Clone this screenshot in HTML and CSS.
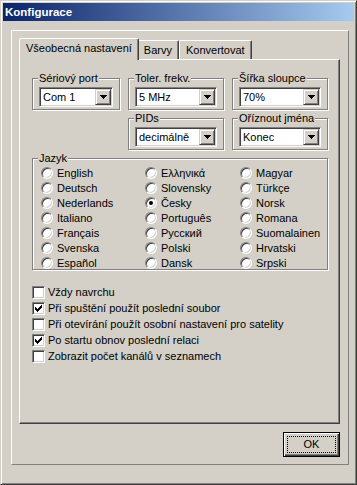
FILE: index.html
```html
<!DOCTYPE html>
<html lang="cs">
<head>
  <meta charset="UTF-8">
  <title>Konfigurace</title>
  <link rel="stylesheet" href="styles.css">
</head>
<body>
  <div class="window">
    <div class="titlebar">Konfigurace</div>
    <div class="frame">
      <div class="tabs">
        <div class="tab active">Všeobecná nastavení</div>
        <div class="tab">Barvy</div>
        <div class="tab">Konvertovat</div>
      </div>
      <div class="panel">
        <div class="combos">
          <div class="group">
            <span class="group-label">Sériový port</span>
            <div class="combo"><span class="combo-text">Com 1</span><span class="combo-btn"><svg width="7" height="4" viewBox="0 0 7 4"><path d="M0 0h7v1H0zM1 1h5v1H1zM2 2h3v1H2zM3 3h1v1H3z"/></svg></span></div>
          </div>
          <div class="group">
            <span class="group-label">Toler. frekv.</span>
            <div class="combo"><span class="combo-text">5 MHz</span><span class="combo-btn"><svg width="7" height="4" viewBox="0 0 7 4"><path d="M0 0h7v1H0zM1 1h5v1H1zM2 2h3v1H2zM3 3h1v1H3z"/></svg></span></div>
          </div>
          <div class="group">
            <span class="group-label">Šířka sloupce</span>
            <div class="combo"><span class="combo-text">70%</span><span class="combo-btn"><svg width="7" height="4" viewBox="0 0 7 4"><path d="M0 0h7v1H0zM1 1h5v1H1zM2 2h3v1H2zM3 3h1v1H3z"/></svg></span></div>
          </div>
          <div class="group col-2">
            <span class="group-label">PIDs</span>
            <div class="combo"><span class="combo-text">decimálně</span><span class="combo-btn"><svg width="7" height="4" viewBox="0 0 7 4"><path d="M0 0h7v1H0zM1 1h5v1H1zM2 2h3v1H2zM3 3h1v1H3z"/></svg></span></div>
          </div>
          <div class="group">
            <span class="group-label">Oříznout jména</span>
            <div class="combo"><span class="combo-text">Konec</span><span class="combo-btn"><svg width="7" height="4" viewBox="0 0 7 4"><path d="M0 0h7v1H0zM1 1h5v1H1zM2 2h3v1H2zM3 3h1v1H3z"/></svg></span></div>
          </div>
        </div>

        <div class="group jazyk">
          <span class="group-label">Jazyk</span>
          <div class="radios">
            <label class="radio-row"><span class="radio"></span>English</label>
            <label class="radio-row"><span class="radio"></span>Ελληνικά</label>
            <label class="radio-row"><span class="radio"></span>Magyar</label>
            <label class="radio-row"><span class="radio"></span>Deutsch</label>
            <label class="radio-row"><span class="radio"></span>Slovensky</label>
            <label class="radio-row"><span class="radio"></span>Türkçe</label>
            <label class="radio-row"><span class="radio"></span>Nederlands</label>
            <label class="radio-row"><span class="radio checked"></span>Česky</label>
            <label class="radio-row"><span class="radio"></span>Norsk</label>
            <label class="radio-row"><span class="radio"></span>Italiano</label>
            <label class="radio-row"><span class="radio"></span>Português</label>
            <label class="radio-row"><span class="radio"></span>Romana</label>
            <label class="radio-row"><span class="radio"></span>Français</label>
            <label class="radio-row"><span class="radio"></span>Русский</label>
            <label class="radio-row"><span class="radio"></span>Suomalainen</label>
            <label class="radio-row"><span class="radio"></span>Svenska</label>
            <label class="radio-row"><span class="radio"></span>Polski</label>
            <label class="radio-row"><span class="radio"></span>Hrvatski</label>
            <label class="radio-row"><span class="radio"></span>Español</label>
            <label class="radio-row"><span class="radio"></span>Dansk</label>
            <label class="radio-row"><span class="radio"></span>Srpski</label>
          </div>
        </div>

        <div class="checks">
          <label class="check-row"><span class="checkbox"></span>Vždy navrchu</label>
          <label class="check-row"><span class="checkbox"><svg width="7" height="7" viewBox="0 0 7 7"><path d="M0 2h1v3H0zM1 3h1v3H1zM2 4h1v3H2zM3 3h1v3H3zM4 2h1v3H4zM5 1h1v3H5zM6 0h1v3H6z"/></svg></span>Při spuštění použít poslední soubor</label>
          <label class="check-row"><span class="checkbox"></span>Při otevírání použít osobní nastavení pro satelity</label>
          <label class="check-row"><span class="checkbox"><svg width="7" height="7" viewBox="0 0 7 7"><path d="M0 2h1v3H0zM1 3h1v3H1zM2 4h1v3H2zM3 3h1v3H3zM4 2h1v3H4zM5 1h1v3H5zM6 0h1v3H6z"/></svg></span>Po startu obnov poslední relaci</label>
          <label class="check-row"><span class="checkbox"></span>Zobrazit počet kanálů v seznamech</label>
        </div>
      </div>

      <div class="footer">
        <button class="btn default"><span class="focus">OK</span></button>
      </div>
    </div>
  </div>
</body>
</html>
```

FILE: styles.css
```css
body {
  margin: 0;
  background-color: #d4d0c8;
  font-family: "Liberation Sans", Arial, sans-serif;
  font-size: 11px;
  color: #000;
}
.window {
  box-sizing: border-box;
  width: 357px;
  height: 485px;
  padding: 2px;
  border: 1px solid;
  border-color: #d4d0c8 #404040 #404040 #d4d0c8;
  box-shadow: inset 1px 1px #fff, inset -1px -1px #808080;
  background-color: #d4d0c8;
}
.titlebar {
  height: 18px;
  line-height: 18px;
  padding-left: 2px;
  background: linear-gradient(to right, #0a246a, #a6caf0);
  color: #fff;
  font-weight: bold;
  font-size: 11.5px;
}

/* outer frame round the tab control */
.frame {
  box-sizing: border-box;
  width: 338px;
  height: 435px;
  margin: 9px 0 0 8px;
  padding: 7px 8px 0 7px;
  border: 1px solid;
  border-color: #fff #808080 #808080 #fff;
}
.tabs {
  display: flex;
  align-items: flex-end;
  height: 21px;
  padding-left: 2px;
}
.tab {
  box-sizing: border-box;
  height: 19px;
  line-height: 18px;
  padding: 0 6px;
  border: 1px solid;
  border-bottom: none;
  border-color: #fff #404040 transparent #fff;
  border-radius: 2px 2px 0 0;
  box-shadow: inset -1px 0 #808080;
  background-color: #d4d0c8;
  white-space: nowrap;
}
.tab.active {
  position: relative;
  z-index: 1;
  height: 22px;
  line-height: 19px;
  margin: 0 -2px -1px;
}
.panel {
  box-sizing: border-box;
  width: 321px;
  height: 365px;
  padding: 18px 11px 0 12px;
  border: 1px solid;
  border-color: #fff #404040 #404040 #fff;
  box-shadow: inset -1px -1px #808080;
}

/* group boxes */
.combos {
  display: grid;
  grid-template-columns: 88px 96px 1fr;
  column-gap: 8px;
  row-gap: 8px;
}
.col-2 {
  grid-column: 2;
}
.group {
  position: relative;
  box-sizing: border-box;
  height: 32px;
  padding: 8px 6px 0;
  border: 1px solid #808080;
  box-shadow: inset 1px 1px #fff, 1px 1px #fff;
}
.group-label {
  position: absolute;
  top: -7px;
  left: 5px;
  padding: 0 1px;
  line-height: 13px;
  background-color: #d4d0c8;
  white-space: nowrap;
}
.combo {
  box-sizing: border-box;
  display: flex;
  height: 20px;
  padding: 1px;
  border: 1px solid;
  border-color: #808080 #fff #fff #808080;
  box-shadow: inset 1px 1px #404040, inset -1px -1px #d4d0c8;
  background-color: #fff;
}
.combo-text {
  flex: 1;
  padding-left: 2px;
  line-height: 16px;
  white-space: nowrap;
  overflow: hidden;
}
.combo-btn {
  box-sizing: border-box;
  display: flex;
  align-items: center;
  justify-content: center;
  width: 16px;
  height: 16px;
  border: 1px solid;
  border-color: #d4d0c8 #404040 #404040 #d4d0c8;
  box-shadow: inset 1px 1px #fff, inset -1px -1px #808080;
  background-color: #d4d0c8;
}
.combo-btn svg {
  shape-rendering: crispEdges;
}

/* language radios */
.jazyk {
  height: 112px;
  margin-top: 8px;
  padding: 6px 0 0 8px;
}
.radios {
  display: grid;
  grid-template-columns: 104px 95px 1fr;
  grid-auto-rows: 15px;
}
.radio-row {
  display: flex;
  align-items: center;
  gap: 4px;
  white-space: nowrap;
}
.radio {
  position: relative;
  box-sizing: border-box;
  width: 12px;
  height: 12px;
  border: 1px solid;
  border-color: #808080 #fff #fff #808080;
  border-radius: 50%;
  box-shadow: inset 1px 1px #404040, inset -1px -1px #d4d0c8;
  background-color: #fff;
}
.radio.checked::after {
  content: "";
  position: absolute;
  top: 3px;
  left: 3px;
  width: 4px;
  height: 4px;
  border-radius: 50%;
  background-color: #000;
}

/* check boxes */
.checks {
  margin-top: 14px;
}
.check-row {
  display: flex;
  align-items: center;
  gap: 3px;
  height: 16px;
  white-space: nowrap;
}
.checkbox {
  box-sizing: border-box;
  display: flex;
  align-items: center;
  justify-content: center;
  width: 13px;
  height: 13px;
  border: 1px solid;
  border-color: #808080 #fff #fff #808080;
  box-shadow: inset 1px 1px #404040, inset -1px -1px #d4d0c8;
  background-color: #fff;
}
.checkbox svg {
  shape-rendering: crispEdges;
}

.footer {
  display: flex;
  justify-content: flex-end;
  margin-top: 8px;
}
.btn {
  box-sizing: border-box;
  width: 57px;
  height: 25px;
  padding: 3px;
  border: 1px solid #000;
  box-shadow: inset 1px 1px #fff, inset -1px -1px #404040, inset -2px -2px #808080;
  background-color: #d4d0c8;
  font: inherit;
  color: #000;
}
.btn .focus {
  display: block;
  height: 100%;
  box-sizing: border-box;
  border: 1px dotted #000;
  line-height: 15px;
}
```
